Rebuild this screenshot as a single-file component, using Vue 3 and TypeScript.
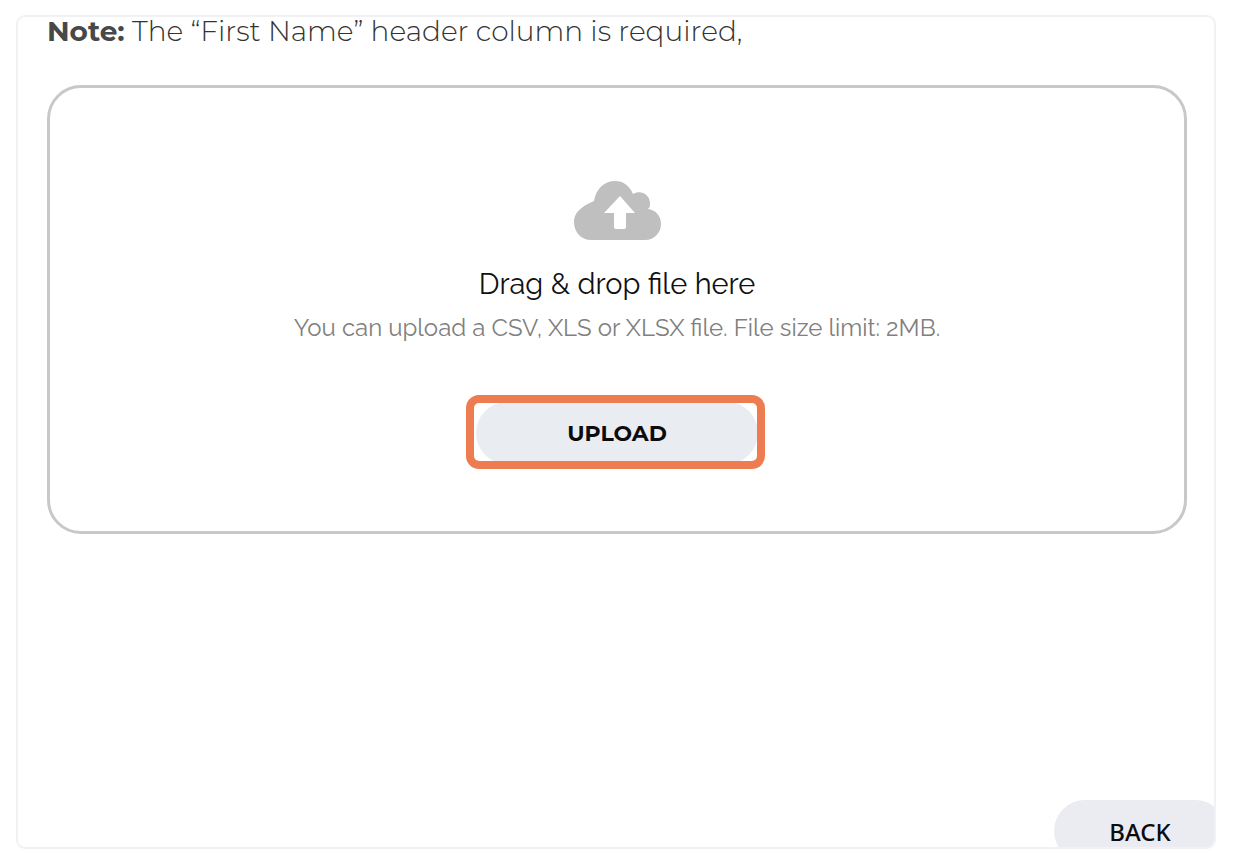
<script setup lang="ts">
import { ref } from 'vue'

const picker = ref<HTMLInputElement | null>(null)

function openPicker(): void {
  picker.value?.click()
}
</script>

<template>
  <main class="page">
    <section class="panel">
      <p class="note"><strong>Note:</strong> The “First Name” header column is required,</p>

      <div class="dropzone">
        <svg class="cloud" viewBox="0 0 88 60" aria-hidden="true">
          <path
            fill="#bfbfbf"
            d="M18 60C8 60 1 52 1 42C1 33 7 27 21 21C23 9 31 1 42 1C50 1 56 5 60 14C68 9 77 15 77 23C77 26 77 27 75 29C83 30 88 36 88 44C88 52 82 60 72 60Z"
          />
          <path fill="#fff" d="M47 16L62 33H53V47Q53 49 51 49H43Q41 49 41 47V33H31Z" />
        </svg>
        <h1 class="title">Drag &amp; drop file here</h1>
        <p class="hint">You can upload a CSV, XLS or XLSX file. File size limit: 2MB.</p>
        <input ref="picker" type="file" accept=".csv,.xls,.xlsx" aria-label="File to upload" hidden />
        <div class="upload-wrap">
          <button type="button" class="button upload" @click="openPicker">UPLOAD</button>
        </div>
      </div>

      <button type="button" class="button back">BACK</button>
    </section>
  </main>
</template>

<style>
body {
  margin: 0;
  background: #fff;
}
</style>

<style scoped>
.page {
  box-sizing: border-box;
  display: flex;
  min-height: 100vh;
  padding: 15px 32px 19px 16px;
  font-family: Montserrat, Inter, "Open Sans", sans-serif;
}

.panel {
  box-sizing: border-box;
  display: flex;
  flex: 1;
  flex-direction: column;
  min-width: 0;
  padding: 0 27px 0 29px;
  overflow: hidden;
  border: 2px solid #f2f2f5;
  border-radius: 9px;
}

.note {
  margin: 0 0 39px;
  color: #333;
  font-size: 28px;
  font-weight: 300;
  line-height: 29px;
}

.note strong {
  color: #484848;
  font-weight: 700;
}

.dropzone {
  display: flex;
  flex-direction: column;
  align-items: center;
  padding: 92px 24px 67px;
  border: 3px solid #c8c8c8;
  border-radius: 34px;
  text-align: center;
}

.cloud {
  width: 88px;
  height: 60px;
}

.title {
  margin: 24px 0 0;
  color: #111;
  font-family: Raleway, Lato, sans-serif;
  font-size: 29px;
  font-weight: 400;
  line-height: 40px;
}

.hint {
  margin: 8px 0 0;
  color: #808080;
  font-family: Raleway, Lato, sans-serif;
  font-size: 24px;
  font-weight: 400;
  line-height: 32px;
}

.upload-wrap {
  position: relative;
  margin-top: 58px;
}

.upload-wrap::after {
  position: absolute;
  inset: -7px -7px -5px -10px;
  border: 8px solid #ed7c50;
  border-radius: 13px;
  content: "";
  pointer-events: none;
}

.button {
  display: block;
  height: 62px;
  padding: 0;
  border: 0;
  border-radius: 32px;
  background: #ebecf1;
  color: #0c0c0f;
  cursor: pointer;
}

.upload {
  width: 282px;
  background: #e9ecf1;
  font-family: Montserrat, Inter, sans-serif;
  font-size: 22px;
  font-weight: 700;
}

.back {
  flex: none;
  align-self: flex-end;
  width: 172px;
  margin: auto -39px -15px 0;
  font-family: "Noto Sans", "Open Sans", sans-serif;
  font-size: 24px;
  font-weight: 500;
}
</style>
